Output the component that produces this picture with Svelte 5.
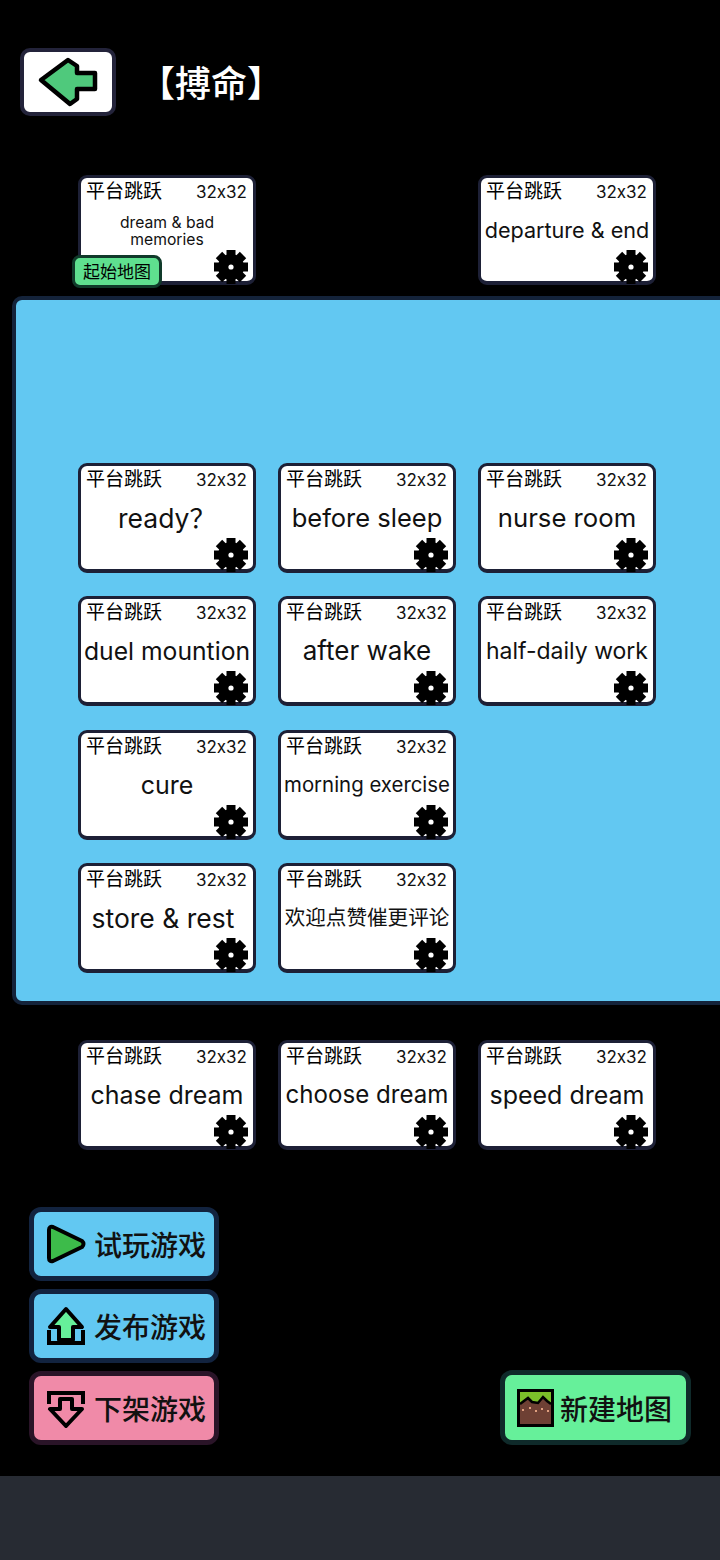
<script>
	const topRow = [
		{ name: "dream & bad memories", fs: 15.7, two: true, start: true },
		null,
		{ name: "departure & end", fs: 21.6 }
	];
	const panelRows = [
		{ name: "ready？", fs: 26.5 },
		{ name: "before sleep", fs: 25.5 },
		{ name: "nurse room", fs: 25.7 },
		{ name: "duel mountion", fs: 24.7 },
		{ name: "after wake", fs: 26 },
		{ name: "half-daily work", fs: 23 },
		{ name: "cure", fs: 25 },
		{ name: "morning exercise", fs: 20.4 },
		null,
		{ name: "store & rest", fs: 26.5, shift: true },
		{ name: "欢迎点赞催更评论", fs: 20.6 }
	];
	const bottomRow = [
		{ name: "chase dream", fs: 25 },
		{ name: "choose dream", fs: 24.1 },
		{ name: "speed dream", fs: 25 }
	];
</script>

{#snippet mapCard(map)}
	{#if map}
		<div class="card">
			<div class="card-head">
				<span class="kind">平台跳跃</span>
				<span class="dim">32x32</span>
			</div>
			<div class="card-name" class:two={map.two} class:shift={map.shift} style:font-size="{map.fs}px">{map.name}</div>
			<svg class="gear" viewBox="-17 -17 34 34">
				<circle r="13" fill="#000" />
				{#each [0, 45, 90, 135] as deg}
					<rect x="-4.5" y="-17" width="9" height="34" fill="#000" transform="rotate({deg})" />
				{/each}
				<circle r="2.6" fill="#fff" />
			</svg>
			{#if map.start}
				<div class="start-tag">起始地图</div>
			{/if}
		</div>
	{:else}
		<div></div>
	{/if}
{/snippet}

<div class="page">
	<div class="header">
		<button class="back">
			<svg width="62" height="50" viewBox="0 0 62 50">
				<path d="M4 23 L31 3 L40 9 L40 16 L58 16 L58 32 L40 32 L40 42 L33 47 Z" fill="#4fc97c" stroke="#000" stroke-width="4.5" stroke-linejoin="round" />
			</svg>
		</button>
		<h1>【搏命】</h1>
	</div>

	<div class="grid top">
		{#each topRow as map}
			{@render mapCard(map)}
		{/each}
	</div>

	<div class="panel">
		<div class="grid">
			{#each panelRows as map}
				{@render mapCard(map)}
			{/each}
		</div>
	</div>

	<div class="grid bottom">
		{#each bottomRow as map}
			{@render mapCard(map)}
		{/each}
	</div>

	<div class="actions">
		<div class="action-col">
			<button class="action blue">
				<svg width="40" height="40" viewBox="0 0 40 40">
					<path d="M3 6 Q3 2 7 3 L36 17 Q39 20 36 23 L7 37 Q3 38 3 34 Z" fill="#3dbb4a" stroke="#000" stroke-width="4" stroke-linejoin="round" />
				</svg>
				试玩游戏
			</button>
			<button class="action blue">
				<svg width="40" height="40" viewBox="0 0 40 40">
					<path d="M3 24 L3 37 L37 37 L37 24" fill="none" stroke="#000" stroke-width="4" />
					<path d="M20 3 L36 21 L27 21 L27 34 L13 34 L13 21 L4 21 Z" fill="#66f09a" stroke="#000" stroke-width="4" stroke-linejoin="round" />
				</svg>
				发布游戏
			</button>
			<button class="action pink">
				<svg width="40" height="40" viewBox="0 0 40 40">
					<path d="M3 16 L3 5 L37 5 L37 16" fill="none" stroke="#000" stroke-width="4" />
					<path d="M14 11 L26 11 L26 21 L36 21 L20 38 L4 21 L14 21 Z" fill="#f08aa8" stroke="#000" stroke-width="4" stroke-linejoin="round" />
				</svg>
				下架游戏
			</button>
		</div>
		<button class="action green">
			<svg width="37" height="38" viewBox="0 0 37 38">
				<rect x="1.5" y="1.5" width="34" height="35" fill="#6e4034" stroke="#000" stroke-width="3" />
				<path d="M3 3 L34 3 L34 15 L30 12 L26 8 L21 14 L15 13 L11 9 L3 15 Z" fill="#7bbf2a" />
				<path d="M3 15 L11 9 L15 13 L21 14 L26 8 L30 12 L34 15" fill="none" stroke="#000" stroke-width="2.5" />
				<g fill="#e0a080">
					<rect x="5" y="20" width="2" height="2" />
					<rect x="12" y="18" width="2" height="2" />
					<rect x="18" y="21" width="2" height="2" />
					<rect x="24" y="19" width="2" height="2" />
					<rect x="30" y="21" width="2" height="2" />
				</g>
			</svg>
			新建地图
		</button>
	</div>

	<div class="footer"></div>
</div>

<style>
	:global(body) {
		background: #000;
		font-family: Inter, "Noto Sans CJK SC", sans-serif;
	}
	.page {
		width: 720px;
		height: 1560px;
		overflow: hidden;
		display: flex;
		flex-direction: column;
	}
	.header {
		display: flex;
		align-items: center;
		height: 68px;
		margin-top: 48px;
		padding-left: 20px;
	}
	.back {
		width: 96px;
		height: 68px;
		box-sizing: border-box;
		background: #fff;
		border: 4px solid #23233a;
		border-radius: 10px;
		padding: 0;
		display: flex;
		align-items: center;
		justify-content: center;
	}
	h1 {
		margin: 0 0 3px 23px;
		font-size: 36px;
		font-weight: 500;
		color: #fff;
		font-family: "Noto Sans CJK SC", sans-serif;
	}
	.grid {
		display: grid;
		grid-template-columns: repeat(3, 178px);
		grid-auto-rows: 110px;
		column-gap: 22px;
		row-gap: 23.33px;
		padding-left: 78px;
	}
	.top {
		margin-top: 59px;
	}
	.panel {
		box-sizing: border-box;
		width: 730px;
		height: 709px;
		margin: 11px 0 0 12px;
		padding-top: 163px;
		background: #62c8f2;
		border: 4px solid #14233a;
		border-radius: 10px;
	}
	.panel .grid {
		padding-left: 62px;
	}
	.bottom {
		margin-top: 35px;
	}
	.card {
		position: relative;
		box-sizing: border-box;
		background: #fff;
		border: 3px solid #1d2036;
		border-bottom-width: 4px;
		border-radius: 9px;
		color: #000;
	}
	.card-head {
		display: flex;
		justify-content: space-between;
		padding: 1px 6px 0 5px;
		line-height: 26px;
	}
	.kind {
		margin-top: -2px;
		font-size: 19px;
		font-family: "Noto Sans CJK SC", sans-serif;
	}
	.dim {
		font-family: Inter, sans-serif;
		font-feature-settings: "calt" 0;
		font-size: 17px;
		color: #111;
	}
	.card-name {
		margin-top: 10px;
		line-height: 30px;
		text-align: center;
		white-space: nowrap;
		color: #111;
		font-family: Inter, "Noto Sans CJK SC", sans-serif;
	}
	.card-name.two {
		line-height: 17px;
		white-space: normal;
		margin-top: 9px;
		padding: 0 24px;
	}
	.card-name.shift {
		transform: translateX(-4px);
	}
	.gear {
		position: absolute;
		right: 5px;
		bottom: -3px;
		width: 34px;
		height: 34px;
	}
	.start-tag {
		position: absolute;
		left: -9px;
		bottom: -7px;
		box-sizing: border-box;
		width: 90px;
		height: 33px;
		background: #5fe08f;
		border: 3px solid #103a2a;
		border-radius: 8px;
		font-family: "Noto Sans CJK SC", sans-serif;
		font-size: 17px;
		line-height: 26px;
		text-align: center;
		color: #000;
	}
	.actions {
		display: flex;
		justify-content: space-between;
		align-items: flex-end;
		margin-top: 57px;
		padding: 0 29px 0 29px;
		height: 238px;
	}
	.action-col {
		display: flex;
		flex-direction: column;
		gap: 8px;
	}
	.action {
		box-sizing: border-box;
		width: 190px;
		height: 74px;
		display: flex;
		align-items: center;
		gap: 8px;
		padding: 0 0 0 12px;
		border: 5px solid #12233f;
		border-radius: 12px;
		font-family: "Noto Sans CJK SC", sans-serif;
		font-size: 28px;
		font-weight: 500;
		color: #111;
		white-space: nowrap;
	}
	.blue {
		background: #62c8f2;
	}
	.pink {
		background: #f08aa8;
		border-color: #2a1428;
	}
	.green {
		background: #66f09a;
		border-color: #0f2a2a;
		width: 191px;
		height: 75px;
		padding-left: 12px;
		gap: 6px;
	}
	.footer {
		height: 84px;
		margin-top: 31px;
		background: #272b33;
		flex-shrink: 0;
	}
</style>
